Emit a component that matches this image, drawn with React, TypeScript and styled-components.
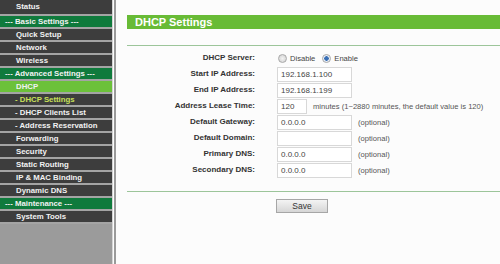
import React from 'react'
import styled, {createGlobalStyle} from 'styled-components'

const GlobalStyle = createGlobalStyle`
    html, body {
        margin: 0;
        padding: 0;
        background: #fcfcfc;
        font-family: "Liberation Sans", Arial, sans-serif;
    }
`

type MenuKind = 'item' | 'section' | 'active' | 'sub' | 'subActive'

const menu: {label: string, kind: MenuKind}[] = [
    {label: 'Status', kind: 'item'},
    {label: '--- Basic Settings ---', kind: 'section'},
    {label: 'Quick Setup', kind: 'item'},
    {label: 'Network', kind: 'item'},
    {label: 'Wireless', kind: 'item'},
    {label: '--- Advanced Settings ---', kind: 'section'},
    {label: 'DHCP', kind: 'active'},
    {label: '- DHCP Settings', kind: 'subActive'},
    {label: '- DHCP Clients List', kind: 'sub'},
    {label: '- Address Reservation', kind: 'sub'},
    {label: 'Forwarding', kind: 'item'},
    {label: 'Security', kind: 'item'},
    {label: 'Static Routing', kind: 'item'},
    {label: 'IP & MAC Binding', kind: 'item'},
    {label: 'Dynamic DNS', kind: 'item'},
    {label: '--- Maintenance ---', kind: 'section'},
    {label: 'System Tools', kind: 'item'},
]

const fields = [
    {label: 'Start IP Address:', value: '192.168.1.100', note: ''},
    {label: 'End IP Address:', value: '192.168.1.199', note: ''},
    {label: 'Address Lease Time:', value: '120', note: 'minutes (1~2880 minutes, the default value is 120)', short: true},
    {label: 'Default Gateway:', value: '0.0.0.0', note: '(optional)'},
    {label: 'Default Domain:', value: '', note: '(optional)'},
    {label: 'Primary DNS:', value: '0.0.0.0', note: '(optional)'},
    {label: 'Secondary DNS:', value: '0.0.0.0', note: '(optional)'},
]

const App: React.FC = () => {
    return (
        <Page>
            <GlobalStyle />
            <Sidebar>
                {menu.map((m, i) => (
                    <MenuRow key={m.label} kind={m.kind} first={i === 0}>{m.label}</MenuRow>
                ))}
            </Sidebar>
            <Edge />
            <Main>
                <TitleBar>DHCP Settings</TitleBar>
                <Rule />
                <Form>
                    <Label>DHCP Server:</Label>
                    <Control>
                        <Radio />
                        <RadioText>Disable</RadioText>
                        <Radio checked />
                        <RadioText>Enable</RadioText>
                    </Control>
                    {fields.map(f => (
                        <React.Fragment key={f.label}>
                            <Label>{f.label}</Label>
                            <Control>
                                <Input short={!!f.short}>{f.value}</Input>
                                {f.note && <Note>{f.note}</Note>}
                            </Control>
                        </React.Fragment>
                    ))}
                </Form>
                <BottomRule />
                <ButtonRow>
                    <SaveButton>Save</SaveButton>
                </ButtonRow>
            </Main>
        </Page>
    )
}

export default App

const Page = styled.div`
    display: flex;
    flex-direction: row;
    width: 500px;
    height: 264px;
    overflow: hidden;
`

const Sidebar = styled.div`
    display: flex;
    flex-direction: column;
    width: 112px;
    height: 100%;
    background: #9b9b9b;
    flex-shrink: 0;
`

const rowBg: Record<MenuKind, string> = {
    item: '#3d3d3d',
    sub: '#3d3d3d',
    subActive: '#3d3d3d',
    section: '#0f7a3c',
    active: '#6cc13a',
}

const MenuRow = styled.div<{kind: MenuKind, first: boolean}>`
    height: ${p => p.first ? '14px' : '11px'};
    line-height: ${p => p.first ? '13px' : '11px'};
    border-bottom: 2px solid #a4a4a4;
    background: ${p => rowBg[p.kind]};
    color: ${p => p.kind === 'subActive' ? '#c8e05a' : '#f2f2f2'};
    font-size: 7.8px;
    font-weight: bold;
    white-space: nowrap;
    padding-left: ${p => p.kind === 'section' ? '5px' : p.kind === 'sub' || p.kind === 'subActive' ? '15px' : '16px'};
`

const Edge = styled.div`
    width: 1px;
    height: 100%;
    border-left: 1px solid #d4d4d4;
    border-right: 2px solid #9a9a9a;
    flex-shrink: 0;
`

const Main = styled.div`
    flex: 1;
    display: flex;
    flex-direction: column;
    padding: 15px 0 0 11px;
`

const TitleBar = styled.div`
    height: 14px;
    line-height: 14px;
    background: #68bb36;
    color: #fff;
    font-size: 11px;
    font-weight: bold;
    padding-left: 8px;
`

const Rule = styled.div`
    height: 1px;
    background: #9cc59a;
    margin-top: 16px;
`

const BottomRule = styled(Rule)`
    margin-top: 13px;
`

const Form = styled.div`
    display: grid;
    grid-template-columns: 128px 1fr;
    grid-auto-rows: 16px;
    column-gap: 22px;
    margin-top: 4px;
`

const Label = styled.div`
    text-align: right;
    font-size: 8px;
    font-weight: bold;
    color: #333;
    line-height: 16px;
`

const Control = styled.div`
    display: flex;
    align-items: center;
    font-size: 7.6px;
    color: #555;
`

const Radio = styled.span<{checked?: boolean}>`
    width: 7px;
    height: 7px;
    border-radius: 50%;
    border: 1px solid #a9a9a9;
    background: ${p => p.checked ? 'radial-gradient(circle, #3a6fb5 0 2px, #e8eef6 2.5px)' : 'radial-gradient(circle, #f2f2f2, #cfcfcf)'};
    margin-right: 3px;
    margin-left: 1px;
`

const RadioText = styled.span`
    margin-right: 6px;
    color: #444;
`

const Input = styled.div<{short: boolean}>`
    box-sizing: border-box;
    width: ${p => p.short ? '30px' : '75px'};
    height: 15px;
    line-height: 13px;
    border: 1px solid #d8d8d8;
    background: #fff;
    padding-left: 3px;
    color: #444;
    font-size: 8px;
`

const Note = styled.span`
    margin-left: 6px;
    color: #555;
`

const ButtonRow = styled.div`
    display: flex;
    padding-left: 149px;
    margin-top: 7px;
`

const SaveButton = styled.div`
    width: 50px;
    height: 12px;
    line-height: 12px;
    text-align: center;
    font-size: 8.5px;
    color: #333;
    border: 1px solid #a6a6a6;
    background: linear-gradient(#f4f4f4, #d6d6d6);
`
